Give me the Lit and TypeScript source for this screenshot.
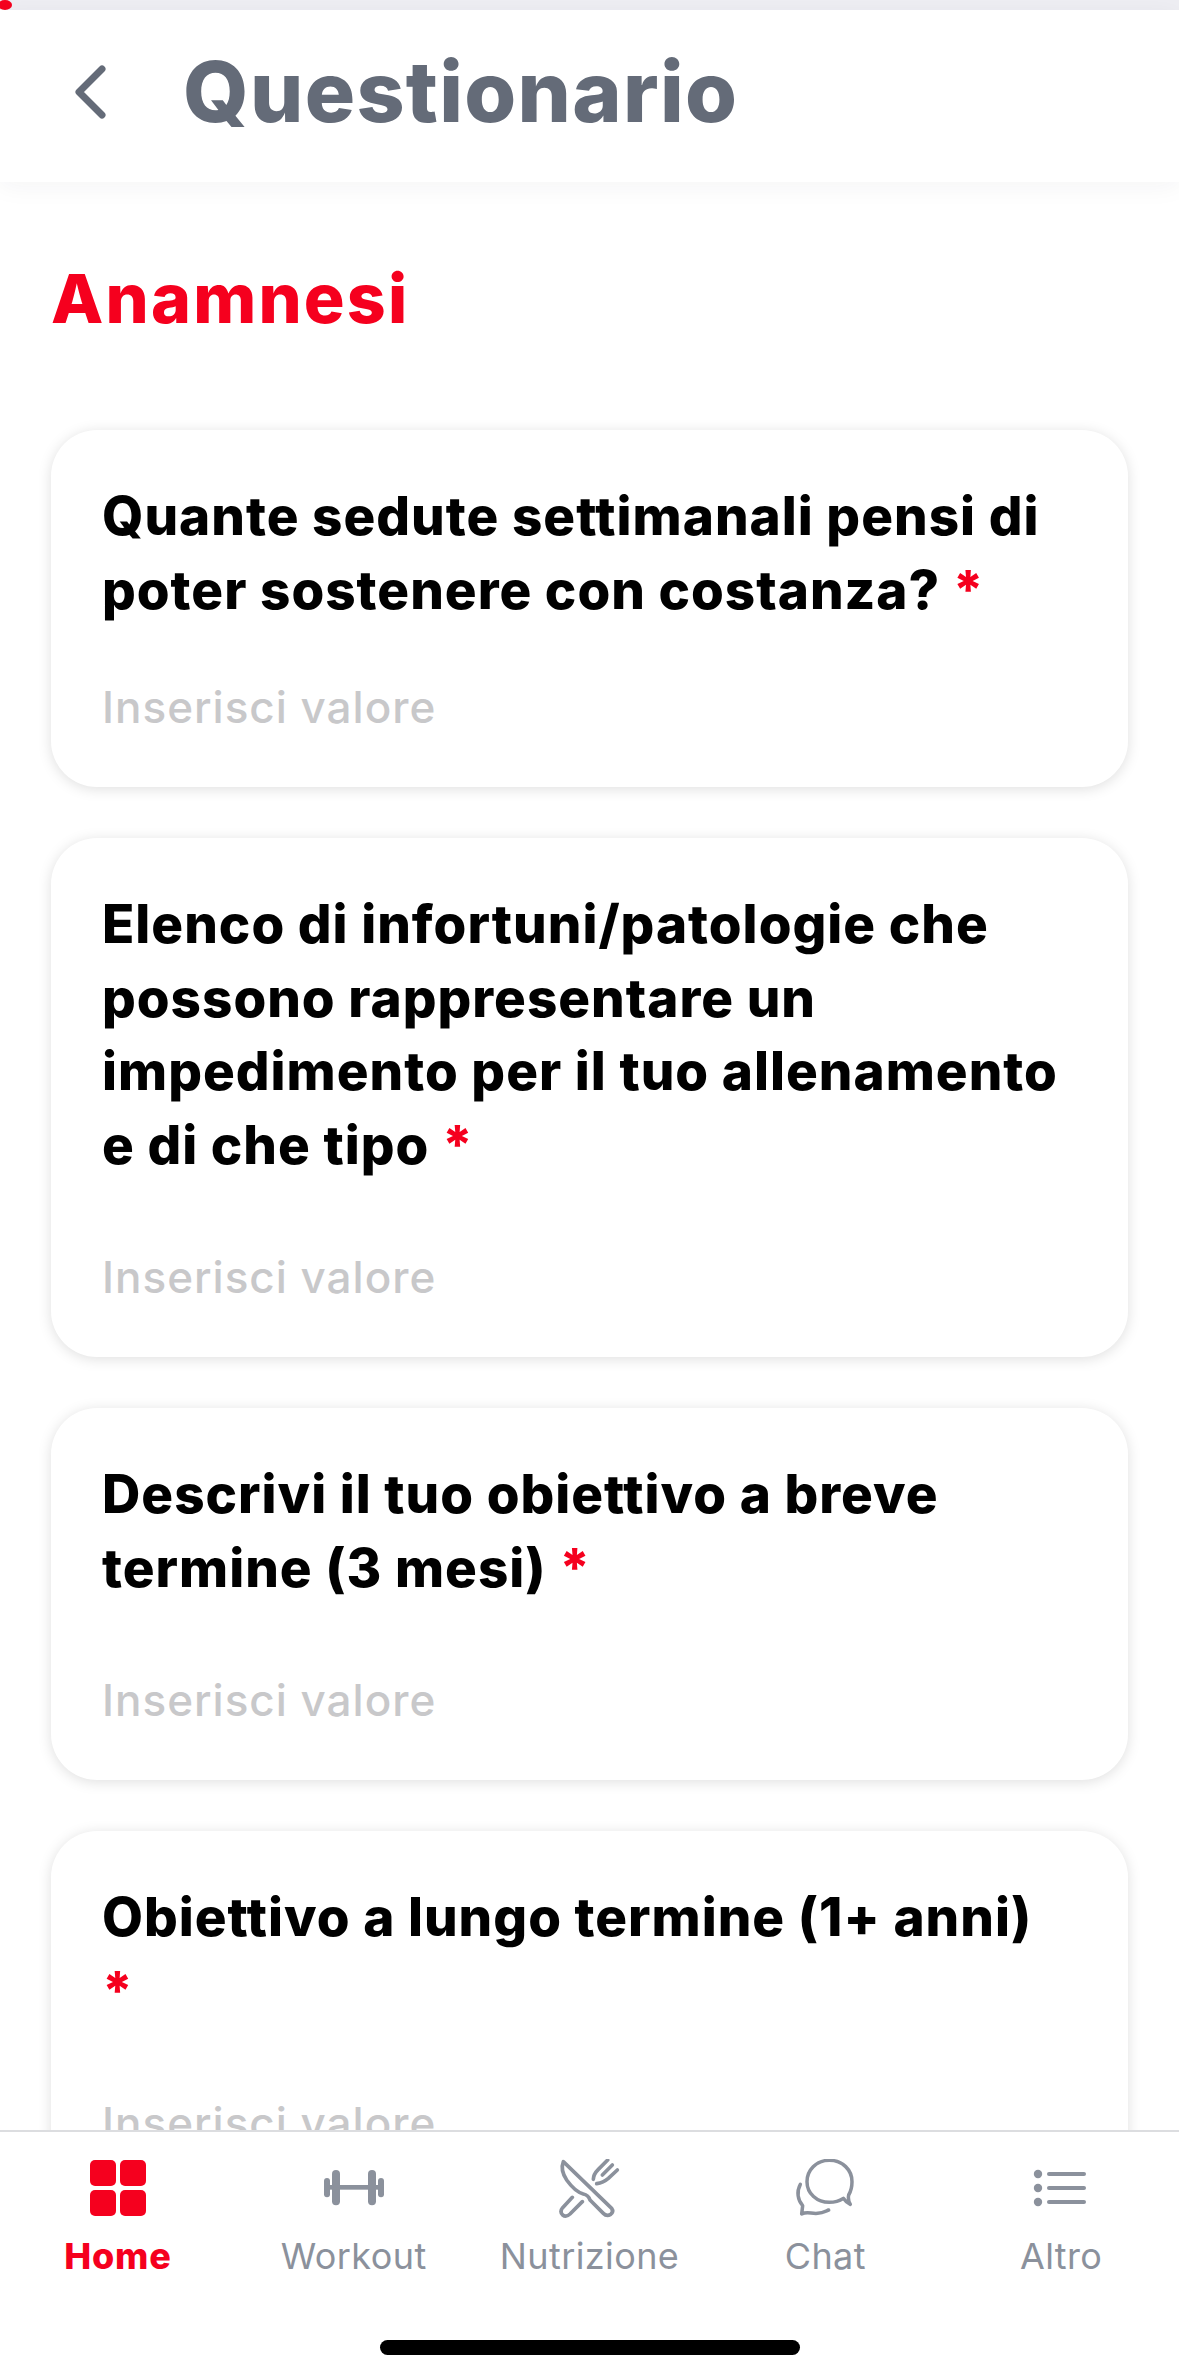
import { LitElement, html, css, svg } from "lit";
import { customElement } from "lit/decorators.js";

const icons: Record<string, unknown> = {
  home: svg`<svg width="60" height="60" viewBox="0 0 60 60"><g fill="currentColor"><rect x="2" y="1" width="26" height="26" rx="5"/><rect x="32" y="1" width="26" height="26" rx="5"/><rect x="2" y="31" width="26" height="26" rx="5"/><rect x="32" y="31" width="26" height="26" rx="5"/></g></svg>`,
  dumbbell: svg`<svg width="64" height="60" viewBox="63 27 192 180"><g fill="currentColor"><rect x="69" y="84" width="18" height="58" rx="9"/><rect x="93" y="60" width="24" height="106" rx="12"/><rect x="85" y="105" width="150" height="14"/><rect x="201" y="60" width="24" height="106" rx="12"/><rect x="231" y="84" width="18" height="58" rx="9"/></g></svg>`,
  food: svg`<svg width="64" height="60" viewBox="51 42 192 180"><g fill="none" stroke="currentColor" stroke-width="11" stroke-linecap="round" stroke-linejoin="round"><path d="M70 50 L215 190 Q222 200 212 208 Q200 215 190 205 L150 165 Q145 150 130 147 Q105 140 80 105 Q60 75 70 50 Z"/><path d="M97 157 L68 188 Q58 200 68 210 Q78 218 90 207 L127 170"/><path d="M203 45 L175 73 Q160 88 160 103"/><path d="M217 60 L187 90"/><path d="M232 75 L205 100 Q190 113 170 116"/></g></svg>`,
  chat: svg`<svg width="60" height="60" viewBox="42 42 180 180"><g fill="none" stroke="currentColor" stroke-width="10.5" stroke-linecap="round" stroke-linejoin="round"><path d="M187 160 Q195 172 208 178 Q200 165 203 150 C210 138 213 125 213 110 C213 75 185 46 145 46 C105 46 78 76 78 110 C78 146 108 172 145 172 C160 172 175 168 187 160 Z"/><path d="M58 118 C46 140 50 165 65 182 L62 207 C80 198 90 207 110 205 C125 204 135 198 143 195"/></g></svg>`,
  list: svg`<svg width="56" height="60" viewBox="0 0 56 60"><g fill="currentColor"><circle cx="5" cy="15" r="4.2"/><circle cx="5" cy="29" r="4.2"/><circle cx="5" cy="43" r="4.2"/><rect x="14" y="13" width="39" height="4" rx="2"/><rect x="14" y="27" width="39" height="4" rx="2"/><rect x="14" y="41" width="39" height="4" rx="2"/></g></svg>`,
};

@customElement("app-root")
export class AppRoot extends LitElement {
  static styles = css`
    :host { display: block; width: 1179px; height: 2379px; font-family: Inter, "Noto Sans", sans-serif; background: #fff; overflow: hidden; }
    .page { height: 2379px; display: flex; flex-direction: column; }
    .progress { height: 10px; background: #eeeef3; flex: none; position: relative; }
    .progress::before { content: ""; position: absolute; left: -2px; top: 0; width: 14px; height: 10px; border-radius: 50%; background: #f5001e; }
    .header { flex: none; height: 172px; display: flex; align-items: center; gap: 75px; padding-left: 74px; padding-bottom: 8px; box-shadow: 0 4px 24px rgba(30,30,50,.05); position: relative; z-index: 1; background: #fff; box-sizing: border-box; }
    .back { display: block; flex: none; width: 34px; height: 58px; color: #646b78; }
    .title { font-size: 84px; font-weight: 800; color: #646b78; line-height: 1; letter-spacing: 1.3px; }
    .content { flex: 1; min-height: 0; overflow: hidden; padding: 0 51px; }
    .section { margin: 76px 0 0; font-size: 68px; font-weight: 800; color: #f5001e; line-height: 80px; letter-spacing: 2.2px; }
    .card { background: #fff; border-radius: 46px; box-shadow: 0 2px 14px rgba(0,0,0,.13); padding: 50px 51px 50px 51px; margin-top: 51px; box-sizing: border-box; }
    .card.first { margin-top: 92px; }
    .q { margin: 0; font-size: 53px; font-weight: 800; line-height: 73.5px; color: #000; letter-spacing: 1px; white-space: nowrap; }
    .req { color: #f5001e; }
    .ph { margin-top: 65px; font-size: 44px; line-height: 60px; font-weight: 500; color: #c8c8ca; letter-spacing: 1px; }
    .first .ph { margin-top: 50px; }
    .tabs { flex: none; height: 249px; border-top: 2px solid #dcdde0; box-sizing: border-box; background: #fff; position: relative; display: grid; grid-template-columns: repeat(5, 1fr); align-items: start; }
    .tab { display: flex; flex-direction: column; align-items: center; padding-top: 27px; color: #8b919c; font-size: 36px; font-weight: 400; letter-spacing: .4px; }
    .tab.active { color: #f5001e; font-weight: 800; letter-spacing: .8px; }
    .tab svg { display: block; }
    .tab span { margin-top: 15px; line-height: 44px; }
    .pill { position: absolute; left: 380px; top: 208px; width: 420px; height: 15px; border-radius: 8px; background: #000; }
  `;

  private q(lines: string[], first = false) {
    return html`<div class="card ${first ? "first" : ""}"><p class="q">${lines.map((l, i) => html`${i ? html`<br />` : ""}${l}`)} <span class="req">*</span></p><div class="ph">Inserisci valore</div></div>`;
  }

  render() {
    const tabs = [["home", "Home"], ["dumbbell", "Workout"], ["food", "Nutrizione"], ["chat", "Chat"], ["list", "Altro"]];
    return html`<div class="page">
      <div class="progress"></div>
      <header class="header">
        <svg class="back" viewBox="0 0 34 58"><path d="M28 6 L5 29 L28 52" fill="none" stroke="currentColor" stroke-width="7" stroke-linecap="round" stroke-linejoin="round"/></svg>
        <div class="title">Questionario</div>
      </header>
      <main class="content">
        <h1 class="section">Anamnesi</h1>
        ${this.q(["Quante sedute settimanali pensi di", "poter sostenere con costanza?"], true)}
        ${this.q(["Elenco di infortuni/patologie che", "possono rappresentare un", "impedimento per il tuo allenamento", "e di che tipo"])}
        ${this.q(["Descrivi il tuo obiettivo a breve", "termine (3 mesi)"])}
        ${this.q(["Obiettivo a lungo termine (1+ anni)", ""])}
      </main>
      <nav class="tabs">
        ${tabs.map(([i, l], n) => html`<div class="tab ${n === 0 ? "active" : ""}">${icons[i]}<span>${l}</span></div>`)}
        <div class="pill"></div>
      </nav>
    </div>`;
  }
}
